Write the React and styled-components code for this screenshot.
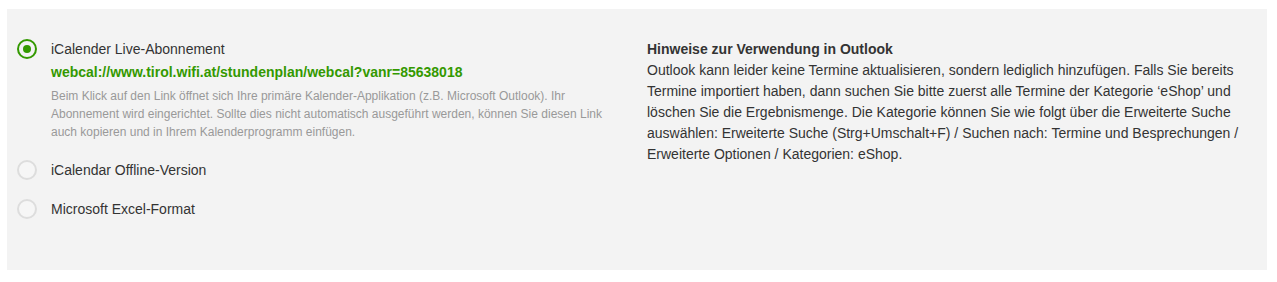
import React from "react";
import styled, { createGlobalStyle } from "styled-components";

const Global = createGlobalStyle`
  html, body { margin: 0; padding: 0; background: #ffffff; }
  body { font-family: "Liberation Sans", Arial, sans-serif; color: #333; }
`;

const Panel = styled.section`
  margin: 9px 0 0 7px;
  width: 1260px;
  height: 261px;
  box-sizing: border-box;
  background: #f3f3f3;
  padding: 30px 10px 0 10px;
  display: grid;
  grid-template-columns: 620px 620px;
  align-items: start;
`;

const LeftCol = styled.div`
  padding-right: 10px;
  display: flex;
  flex-direction: column;
  gap: 19px;
`;

const RightCol = styled.div`
  padding: 0 10px;
  font-size: 14px;
  line-height: 21px;
  color: #333;
`;

const Option = styled.div`
  display: grid;
  grid-template-columns: 20px 1fr;
  column-gap: 14px;
  align-items: start;
`;

const Radio = styled.span`
  width: 20px;
  height: 20px;
  box-sizing: border-box;
  border-radius: 50%;
  border: 2px solid ${(p) => (p.$checked ? "#339900" : "#dddddd")};
  background: ${(p) => (p.$checked ? "transparent" : "#f6f6f6")};
  display: flex;
  align-items: center;
  justify-content: center;
  &::after {
    content: "";
    display: ${(p) => (p.$checked ? "block" : "none")};
    width: 8px;
    height: 8px;
    border-radius: 50%;
    background: #339900;
  }
`;

const Body = styled.div`
  display: flex;
  flex-direction: column;
`;

const Label = styled.div`
  font-size: 14px;
  line-height: 20px;
  color: #333;
`;

const Link = styled.a`
  margin-top: 3px;
  font-size: 14px;
  font-weight: bold;
  line-height: 20px;
  color: #339900;
  text-decoration: none;
`;

const Note = styled.p`
  margin: 5px 0 0;
  font-size: 12px;
  line-height: 18px;
  color: #999;
`;

const Heading = styled.div`
  font-weight: bold;
`;

const Text = styled.p`
  margin: 0;
`;

const options = [
  { label: "iCalender Live-Abonnement", checked: true },
  { label: "iCalendar Offline-Version", checked: false },
  { label: "Microsoft Excel-Format", checked: false },
];

export default function App() {
  return (
    <>
      <Global />
      <Panel>
        <LeftCol>
          {options.map((o) => (
            <Option key={o.label}>
              <Radio $checked={o.checked} />
              <Body>
                <Label>{o.label}</Label>
                {o.checked && (
                  <>
                    <Link href="#">
                      webcal://www.tirol.wifi.at/stundenplan/webcal?vanr=85638018
                    </Link>
                    <Note>
                      Beim Klick auf den Link öffnet sich Ihre primäre Kalender-Applikation (z.B. Microsoft Outlook). Ihr Abonnement wird eingerichtet. Sollte dies nicht automatisch ausgeführt werden, können Sie diesen Link auch kopieren und in Ihrem Kalenderprogramm einfügen.
                    </Note>
                  </>
                )}
              </Body>
            </Option>
          ))}
        </LeftCol>
        <RightCol>
          <Heading>Hinweise zur Verwendung in Outlook</Heading>
          <Text>
            Outlook kann leider keine Termine aktualisieren, sondern lediglich hinzufügen. Falls Sie bereits Termine importiert haben, dann suchen Sie bitte zuerst alle Termine der Kategorie ‘eShop’ und löschen Sie die Ergebnismenge. Die Kategorie können Sie wie folgt über die Erweiterte Suche auswählen: Erweiterte Suche (Strg+Umschalt+F) / Suchen nach: Termine und Besprechungen / Erweiterte Optionen / Kategorien: eShop.
          </Text>
        </RightCol>
      </Panel>
    </>
  );
}
